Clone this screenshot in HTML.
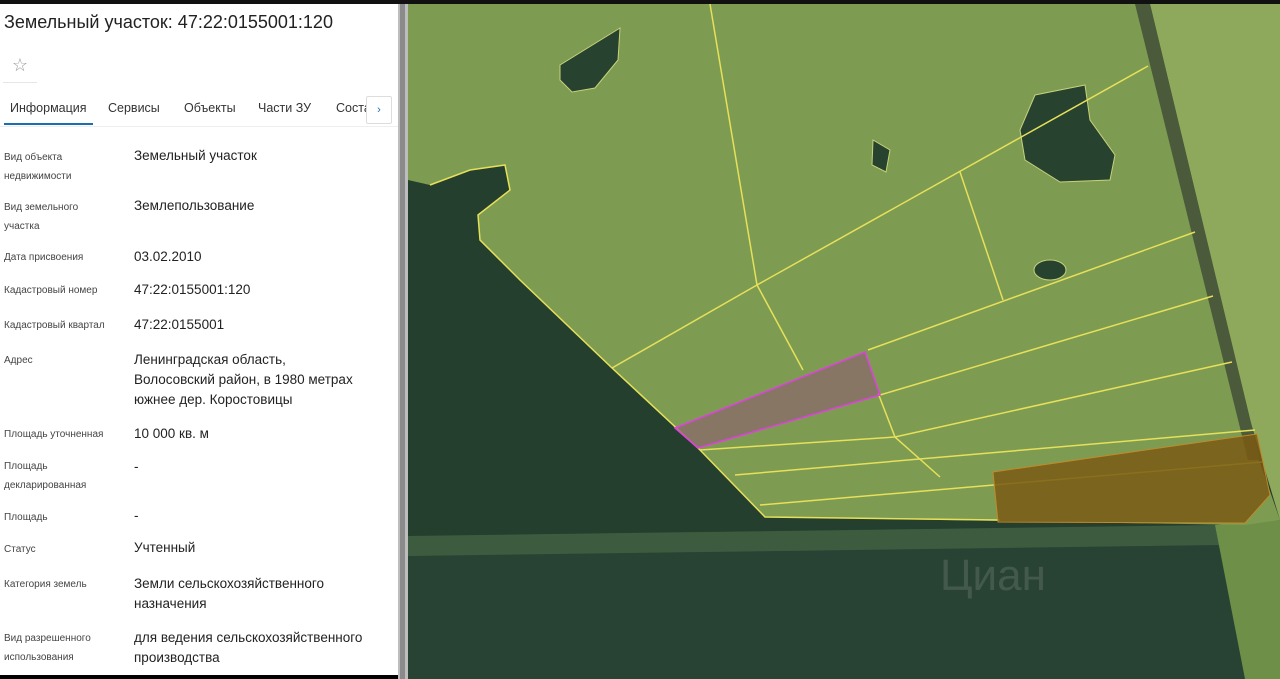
<!DOCTYPE html>
<html><head><meta charset="utf-8"><style>
body{margin:0;width:1280px;height:679px;overflow:hidden;background:#000;font-family:"Liberation Sans",sans-serif;position:relative}
#top{position:absolute;left:0;top:0;width:1280px;height:4px;background:#111}
#left{position:absolute;left:0;top:4px;width:398px;height:671px;background:#fff;overflow:hidden}
#bar{position:absolute;left:398px;top:4px;width:10px;height:675px;background:#bdbdbd}
#bar div{position:absolute;left:2px;top:0;width:5px;height:100%;background:#8a8a8a}
h1{position:absolute;left:4px;top:8px;margin:0;font-size:18px;font-weight:normal;color:#222}
.star{position:absolute;left:3px;top:44px;width:34px;height:34px;border-bottom:1px solid #e6e6e6;color:#999;font-size:18px;text-align:center;line-height:34px}
.tabs{position:absolute;left:0;top:92px;width:398px;height:30px;border-bottom:1px solid #eee;font-size:12.5px;color:#333}
.tabs span{position:absolute;top:5px}
.tabs .act{border-bottom:2px solid #1a6fb0;padding:0 6px 8px 6px;left:4px}
.arrow{position:absolute;left:366px;top:92px;width:24px;height:26px;border:1px solid #ddd;background:#fff;color:#1a6fb0;font-size:11px;text-align:center;line-height:26px;border-radius:2px}
.l{position:absolute;left:4px;font-size:10px;color:#444;line-height:19px}
.v{position:absolute;left:134px;font-size:13.5px;color:#222;line-height:20px}
#map{position:absolute;left:408px;top:4px}
</style></head><body>
<div id="top"></div>
<div id="left">
<h1>Земельный участок: 47:22:0155001:120</h1>
<div class="star">☆</div>
<div class="tabs"><span class="act">Информация</span><span style="left:108px">Сервисы</span><span style="left:184px">Объекты</span><span style="left:258px">Части ЗУ</span><span style="left:336px">Соста</span></div>
<div class="arrow">›</div>
<div class="l" style="top:144px">Вид объекта<br>недвижимости</div><div class="v" style="top:142px">Земельный участок</div>
<div class="l" style="top:194px">Вид земельного<br>участка</div><div class="v" style="top:192px">Землепользование</div>
<div class="l" style="top:244px">Дата присвоения</div><div class="v" style="top:243px">03.02.2010</div>
<div class="l" style="top:277px">Кадастровый номер</div><div class="v" style="top:276px">47:22:0155001:120</div>
<div class="l" style="top:312px">Кадастровый квартал</div><div class="v" style="top:311px">47:22:0155001</div>
<div class="l" style="top:347px">Адрес</div><div class="v" style="top:346px">Ленинградская область,<br>Волосовский район, в 1980 метрах<br>южнее дер. Коростовицы</div>
<div class="l" style="top:421px">Площадь уточненная</div><div class="v" style="top:420px">10 000 кв. м</div>
<div class="l" style="top:453px">Площадь<br>декларированная</div><div class="v" style="top:453px">-</div>
<div class="l" style="top:504px">Площадь</div><div class="v" style="top:502px">-</div>
<div class="l" style="top:536px">Статус</div><div class="v" style="top:534px">Учтенный</div>
<div class="l" style="top:571px">Категория земель</div><div class="v" style="top:570px">Земли сельскохозяйственного<br>назначения</div>
<div class="l" style="top:625px">Вид разрешенного<br>использования</div><div class="v" style="top:624px">для ведения сельскохозяйственного<br>производства</div>
</div>
<div id="bar"><div></div></div>
<svg id="map" width="872" height="675" viewBox="408 4 872 675">
<rect x="408" y="4" width="872" height="675" fill="#243f2e"/>
<rect x="408" y="540" width="872" height="140" fill="#284333"/>
<path d="M408 536 L1220 525 L1220 545 L408 556Z" fill="#3d5c3f"/>
<path d="M1215 525 L1280 520 L1280 679 L1245 679Z" fill="#6d8f48"/>
<path d="M408 4 L1150 4 L1245 420 L1280 520 L1245 525 L765 517 L700 450 L612 368 L520 280 L480 240 L478 215 L510 190 L505 165 L470 170 L430 185 L408 180Z" fill="#7d9c52"/>
<path d="M1150 4 L1280 4 L1280 520 L1250 420Z" fill="#8ea85c"/>
<path d="M1135 4 L1150 4 L1260 460 L1248 460Z" fill="#4a5a3a"/>
<path d="M560 65 L620 28 L618 60 L595 88 L572 92 L560 80Z" fill="#27432f" stroke="#c9d17a" stroke-width="1"/>
<path d="M1035 95 L1085 85 L1090 120 L1115 155 L1110 180 L1060 182 L1025 160 L1020 130Z" fill="#27432f" stroke="#c9d17a"/>
<path d="M873 140 L890 150 L886 172 L872 165Z" fill="#27432f" stroke="#c9d17a"/>
<ellipse cx="1050" cy="270" rx="16" ry="10" fill="#27432f" stroke="#c9d17a"/>
<g stroke="#e6e05a" stroke-width="1.5" fill="none">
<path d="M710 4 L757 285 L803 370"/><path d="M612 368 L757 285 L1148 66"/>
<path d="M960 172 L1003 300"/><path d="M868 350 L1195 232"/>
<path d="M880 395 L1213 296"/><path d="M700 450 L895 437 L1232 362"/>
<path d="M735 475 L1255 430"/><path d="M760 505 L1262 462"/>
<path d="M878 393 L895 437 L940 477"/>
<path d="M430 185 L470 170 L505 165 L510 190 L478 215 L480 240 L520 280 L612 368 L700 450 L765 517 L1000 520"/>
</g>
<path d="M993 472 L1257 434 L1270 495 L1245 523 L998 522Z" fill="#7a5a14" fill-opacity="0.85" stroke="#c08a2a"/>
<path d="M675 428 L865 352 L880 395 L698 448Z" fill="#8a6a6a" fill-opacity="0.75" stroke="#e040e0" stroke-width="1.5"/>
<text x="940" y="590" font-family="Liberation Sans" font-size="44" fill="#fff" fill-opacity="0.12">Циан</text>
</svg>
</body></html>
